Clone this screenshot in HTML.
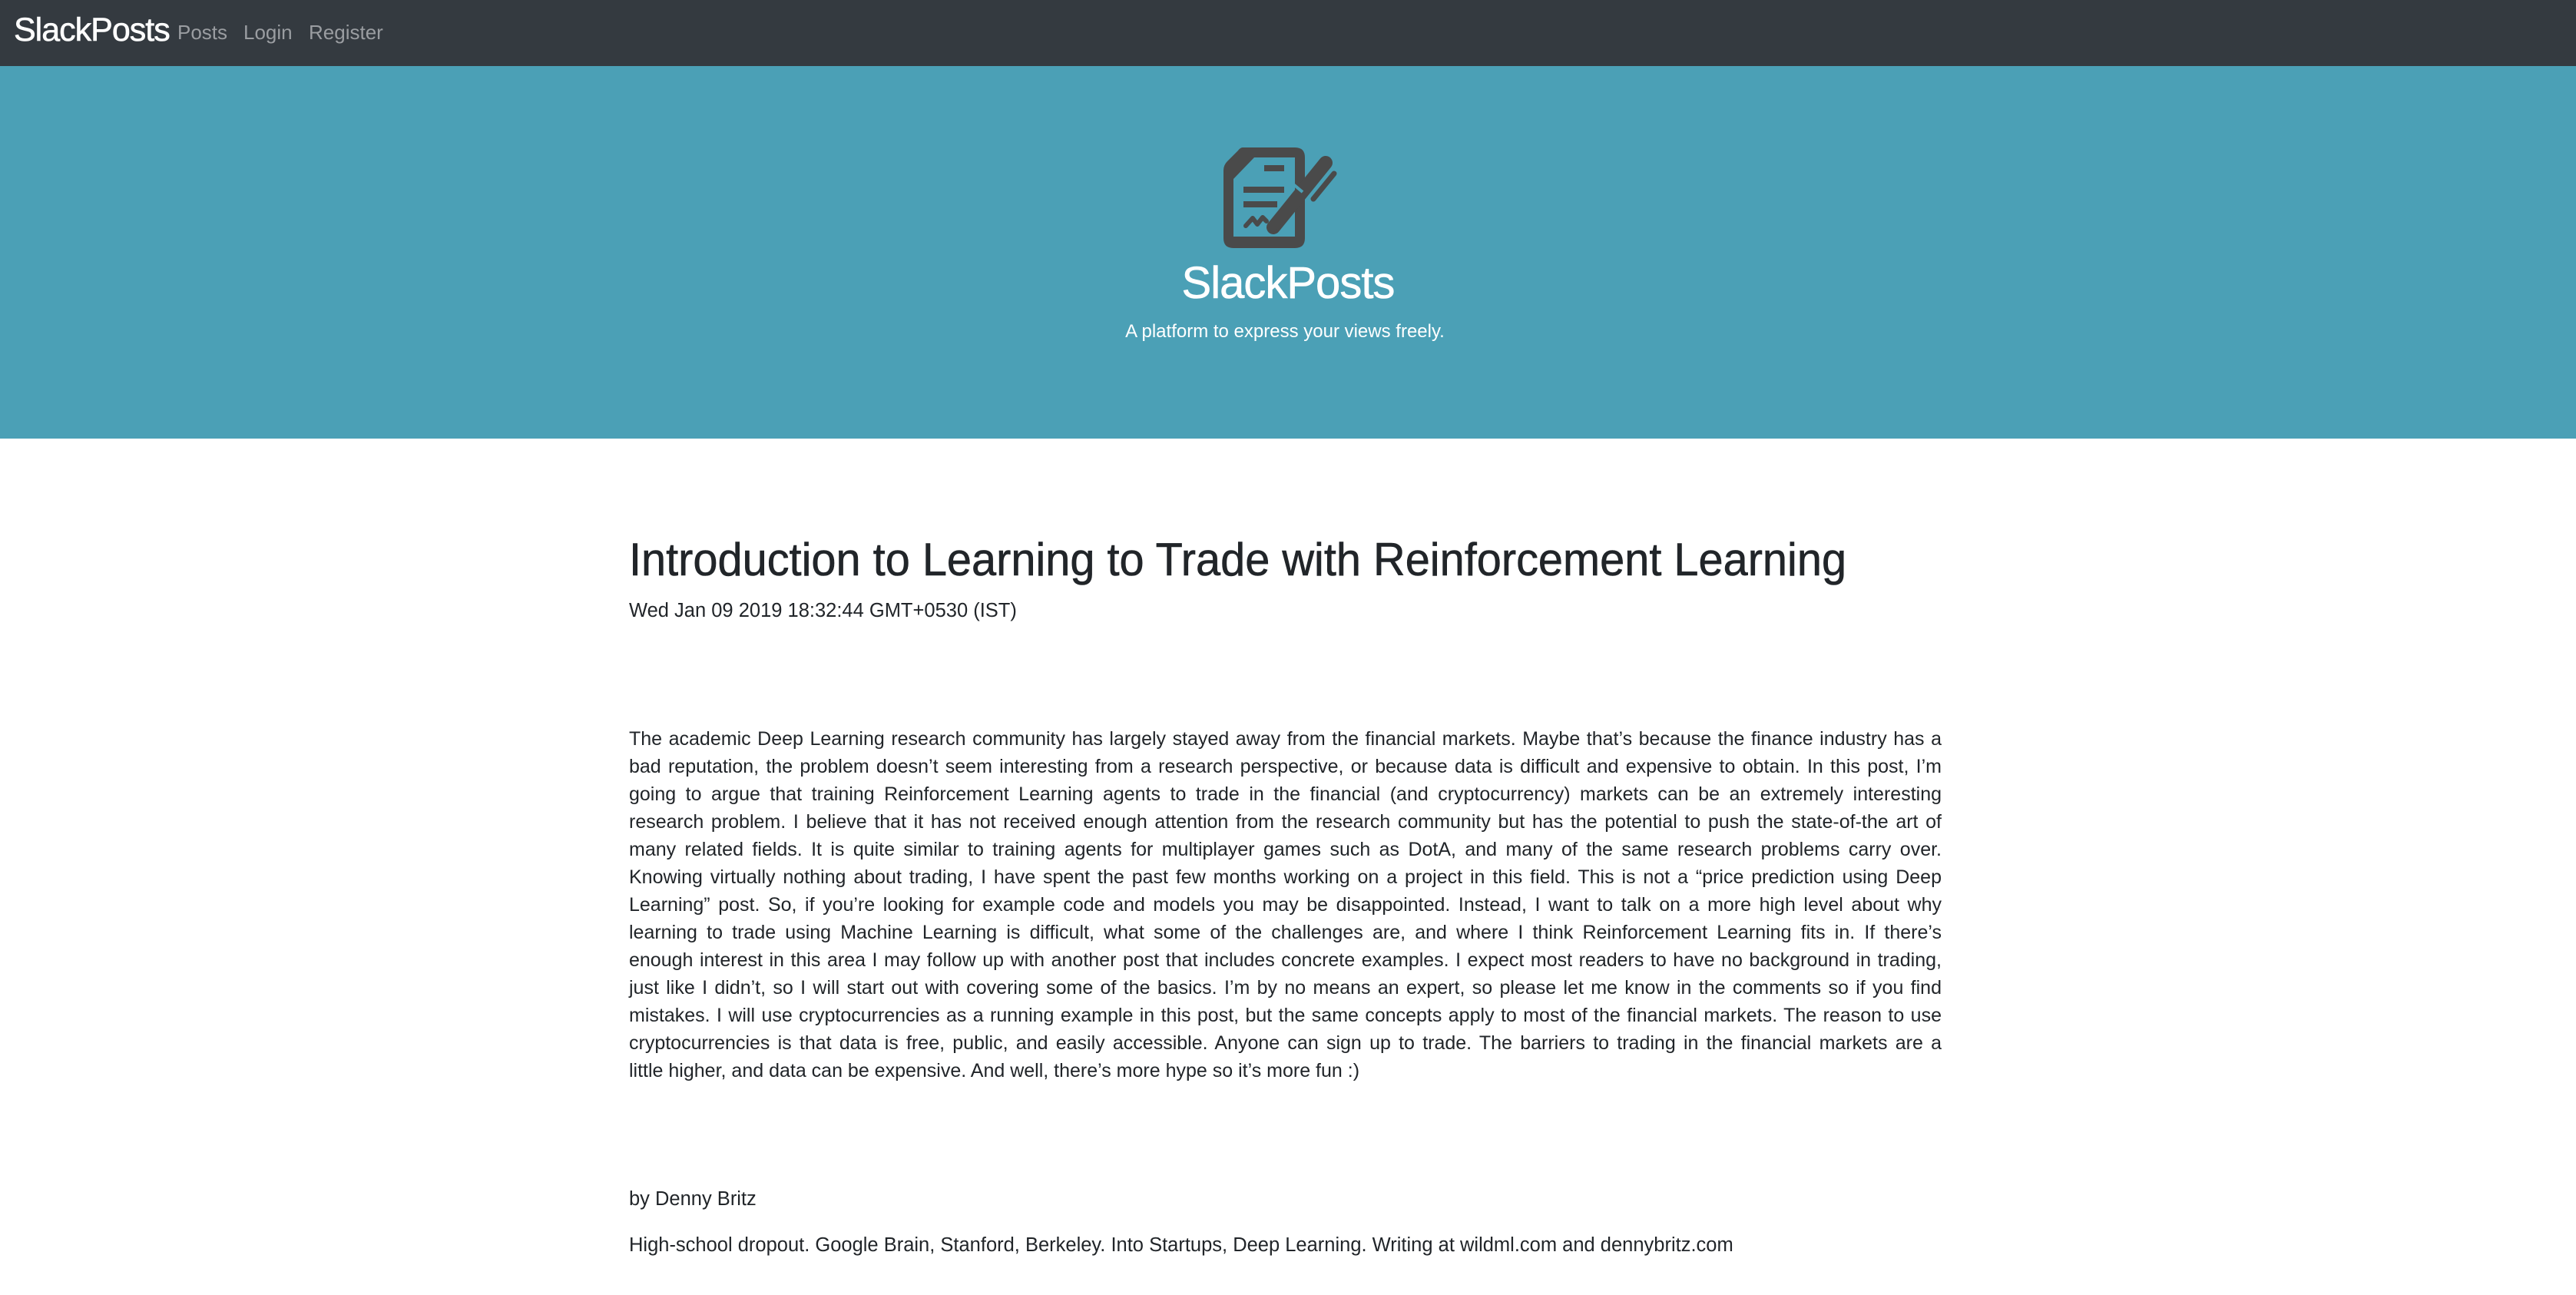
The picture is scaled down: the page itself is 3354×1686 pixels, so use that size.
<!DOCTYPE html>
<html><head><meta charset="utf-8"><style>
*{margin:0;padding:0;box-sizing:border-box}
body{width:3354px;height:1686px;background:#fff;font-family:"Liberation Sans",sans-serif;color:#212529;position:relative;overflow:hidden}
.nav{position:absolute;left:0;top:0;width:3354px;height:86px;background:#343a40}
.brand{position:absolute;left:18px;top:15px;font-size:43px;color:#fff;letter-spacing:-1px;-webkit-text-stroke:0.6px #fff}
.nl{position:absolute;top:27px;font-size:26px;color:#9a9da1}
.hero{position:absolute;left:0;top:86px;width:3354px;height:485px;background:#4ba0b6}
.ht{position:absolute;left:0;width:3354px;text-align:center;color:#fff}
.c{position:absolute;left:819px;width:1709px}
h1{font-weight:normal;font-size:60px;white-space:nowrap;transform:scaleX(.962);transform-origin:left;color:#212529;-webkit-text-stroke:0.6px #212529}
.l{font-size:25px;line-height:36px;height:36px;text-align:justify;text-align-last:justify;white-space:nowrap;overflow:visible}
.l.e{text-align-last:left}
.p{font-size:25.5px}
</style></head><body>
<div class="nav">
<div class="brand">SlackPosts</div>
<div class="nl" style="left:231px">Posts</div>
<div class="nl" style="left:317px">Login</div>
<div class="nl" style="left:402px">Register</div>
</div>
<div class="hero">
<svg style="position:absolute;left:1586px;top:99px" width="170" height="145" viewBox="1580 185 170 145">
<path fill="#4a4a4a" fill-rule="evenodd" d="M1612 192H1680Q1693 192 1693 205V310Q1693 323 1680 323H1600Q1587 323 1587 310V222Q1587 215 1592 210L1606 196Q1609 192 1612 192ZM1627 205H1680V308H1600V233Z"/>
<rect x="1640" y="215" width="26" height="8" fill="#4a4a4a"/>
<rect x="1613" y="243" width="53" height="8" fill="#4a4a4a"/>
<rect x="1613" y="262" width="44" height="8" fill="#4a4a4a"/>
<path d="M1616 294L1625 284L1631 292L1638 283L1643 288" stroke="#4a4a4a" stroke-width="6" fill="none" stroke-linecap="round" stroke-linejoin="round"/>
<path d="M1652 296L1665 280L1720 212" stroke="#4a4a4a" stroke-width="18" stroke-linecap="round"/>
<path d="M1650 300L1660 288" stroke="#4a4a4a" stroke-width="8" stroke-linecap="round"/>
<line x1="1678" y1="240" x2="1690" y2="250" stroke="#4ba0b6" stroke-width="4"/>
<path d="M1704 259L1731 226" stroke="#4a4a4a" stroke-width="7" stroke-linecap="round"/>
</svg>
<div class="ht" style="top:249px;font-size:58px;letter-spacing:-1px;-webkit-text-stroke:0.6px #fff">SlackPosts</div>
<div class="ht" style="top:332px;font-size:24px;padding-right:8px">A platform to express your views freely.</div>
</div>
<div class="c" style="top:694px"><h1>Introduction to Learning to Trade with Reinforcement Learning</h1></div>
<div class="c p" style="top:781px">Wed Jan 09 2019 18:32:44 GMT+0530 (IST)</div>
<div class="c" style="top:944px">
<div class="l">The academic Deep Learning research community has largely stayed away from the financial markets. Maybe that’s because the finance industry has a</div>
<div class="l">bad reputation, the problem doesn’t seem interesting from a research perspective, or because data is difficult and expensive to obtain. In this post, I’m</div>
<div class="l">going to argue that training Reinforcement Learning agents to trade in the financial (and cryptocurrency) markets can be an extremely interesting</div>
<div class="l">research problem. I believe that it has not received enough attention from the research community but has the potential to push the state-of-the art of</div>
<div class="l">many related fields. It is quite similar to training agents for multiplayer games such as DotA, and many of the same research problems carry over.</div>
<div class="l">Knowing virtually nothing about trading, I have spent the past few months working on a project in this field. This is not a “price prediction using Deep</div>
<div class="l">Learning” post. So, if you’re looking for example code and models you may be disappointed. Instead, I want to talk on a more high level about why</div>
<div class="l">learning to trade using Machine Learning is difficult, what some of the challenges are, and where I think Reinforcement Learning fits in. If there’s</div>
<div class="l">enough interest in this area I may follow up with another post that includes concrete examples. I expect most readers to have no background in trading,</div>
<div class="l">just like I didn’t, so I will start out with covering some of the basics. I’m by no means an expert, so please let me know in the comments so if you find</div>
<div class="l">mistakes. I will use cryptocurrencies as a running example in this post, but the same concepts apply to most of the financial markets. The reason to use</div>
<div class="l">cryptocurrencies is that data is free, public, and easily accessible. Anyone can sign up to trade. The barriers to trading in the financial markets are a</div>
<div class="l e">little higher, and data can be expensive. And well, there’s more hype so it’s more fun :)</div>
</div>
<div class="c p" style="top:1547px">by Denny Britz</div>
<div class="c p" style="top:1607px">High-school dropout. Google Brain, Stanford, Berkeley. Into Startups, Deep Learning. Writing at wildml.com and dennybritz.com</div>
</body></html>
